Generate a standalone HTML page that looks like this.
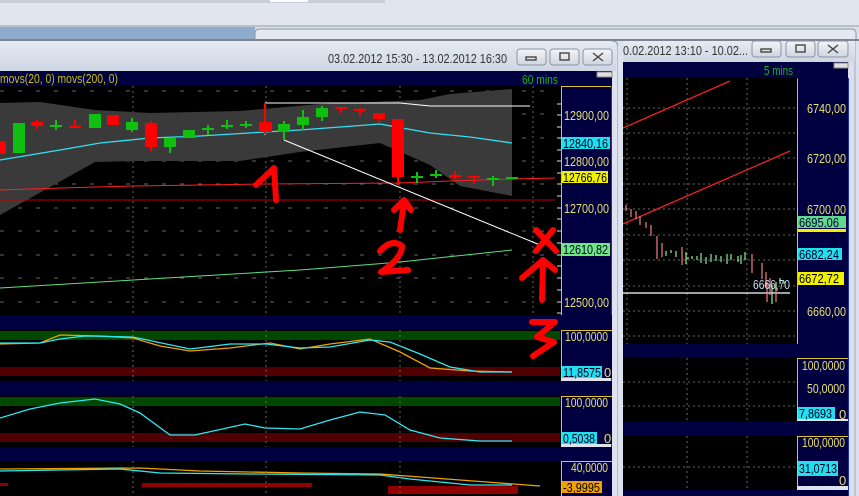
<!DOCTYPE html>
<html><head><meta charset="utf-8"><style>
html,body{margin:0;padding:0;width:859px;height:496px;overflow:hidden;background:#dde2ee}
svg{display:block}
text{font-family:"Liberation Sans",sans-serif;font-size:13px}
</style></head><body>
<svg width="859" height="496" viewBox="0 0 859 496" xmlns="http://www.w3.org/2000/svg">
<defs>
<linearGradient id="tb" x1="0" y1="0" x2="0" y2="1"><stop offset="0" stop-color="#e6ebf3"/><stop offset="1" stop-color="#cdd6e3"/></linearGradient>
<linearGradient id="btn" x1="0" y1="0" x2="0" y2="1"><stop offset="0" stop-color="#f2f4f8"/><stop offset="1" stop-color="#cfd6e0"/></linearGradient>
</defs>
<rect x="0" y="0" width="859" height="26" fill="#e1e5f0"/>
<rect x="0" y="0" width="385" height="3" fill="#c9ced8"/>
<rect x="270" y="0" width="38" height="2" fill="#fff"/>
<rect x="0" y="25" width="859" height="2" fill="#b9c0cc"/>
<rect x="0" y="27" width="255" height="13" fill="#8fabcb"/>
<path d="M255 40 V33 Q255 29 260 29 H852 Q856 29 856 33 V40 Z" fill="#e3e8f1" stroke="#8d96a4"/>
<rect x="0" y="39" width="859" height="2" fill="#7d8592"/>
<rect x="0" y="41" width="616" height="30" fill="url(#tb)"/>
<path d="M612 41 Q618 41 618 47 V496" stroke="#8d96a4" fill="none"/>
<text x="328" y="63" fill="#333" textLength="179" lengthAdjust="spacingAndGlyphs">03.02.2012 15:30 - 13.02.2012 16:30</text>
<g stroke="#8a94a3" fill="url(#btn)">
<rect x="517" y="49" width="29" height="16" rx="3"/><rect x="550" y="49" width="29" height="16" rx="3"/><rect x="583" y="49" width="29" height="16" rx="3"/>
</g>
<g stroke="#444" stroke-width="1.4" fill="none">
<rect x="526" y="57" width="10" height="3"/><rect x="560" y="53" width="9" height="7"/><path d="M593 53 L603 61 M603 53 L593 61"/>
</g>
<rect x="0" y="71" width="612" height="15" fill="#000040"/>
<text x="0" y="83" fill="#c8c000" textLength="118" lengthAdjust="spacingAndGlyphs">movs(20, 0) movs(200, 0)</text>
<text x="522" y="84" fill="#10b810" textLength="36" lengthAdjust="spacingAndGlyphs">60 mins</text>
<rect x="597" y="72" width="15" height="5" fill="#e0e0e0" stroke="#888"/>
<rect x="0" y="86" width="561" height="229" fill="#000"/>
<g stroke="#666" stroke-dasharray="2,3">
<path d="M133 86V315M266 86V315M400 86V315M533 86V315"/>
<path d="M0 91H555M0 114H555M0 138H555M0 161H555M0 184H555M0 208H555M0 231H555M0 255H555M0 278H555M0 302H555" stroke-dasharray="4,14"/>
</g>
<polygon points="0,103 40,102 95,110 150,113 240,111 320,104 420,100 450,94 512,89 512,196 460,186 430,165 380,143 300,152 240,161 140,161 95,162 0,215" fill="#3a3a3a"/>
<path d="M0,160 L60,150 L100,143 L150,138 L200,136 L265,132 L300,130 L380,124 L430,133 L470,137 L512,143" stroke="#30e0f0" stroke-width="1.3" fill="none"/>
<path d="M0,190 L60,188 L133,186 L200,185 L266,184 L400,183 L450,181 L512,179 L555,178" stroke="#ff2020" fill="none"/>
<path d="M0,200 H555" stroke="#c00000" fill="none"/>
<path d="M0,288 L100,282 L200,276 L300,270 L400,262 L512,250" stroke="#60e080" fill="none"/>
<path d="M265,103 V135 M265,103 H400 L430,106 H530" stroke="#fff" fill="none"/>
<path d="M284,140 L540,245" stroke="#fff" fill="none"/>
<g stroke-width="2">
<rect x="0" y="141" width="6" height="13" fill="#f00"/>
<rect x="13" y="123" width="12" height="30" fill="#10c010"/>
<rect x="31" y="122" width="12" height="4" fill="#f00"/><path d="M37 120V129" stroke="#f00"/>
<path d="M50 126H62M56 120V130" stroke="#10c010"/>
<path d="M69 127H81M75 120V127" stroke="#f00"/>
<rect x="89" y="114" width="12" height="14" fill="#10c010"/>
<rect x="107" y="115" width="12" height="10" fill="#f00"/>
<rect x="126" y="122" width="12" height="8" fill="#10c010"/><path d="M132 118V132" stroke="#10c010"/>
<rect x="145" y="123" width="12" height="24" fill="#f00"/><path d="M151 121V151" stroke="#f00"/>
<rect x="164" y="138" width="12" height="9" fill="#10c010"/><path d="M170 147V153" stroke="#10c010"/>
<rect x="183" y="130" width="12" height="8" fill="#10c010"/>
<path d="M202 129H214M208 125V135" stroke="#10c010"/>
<path d="M221 126H233M227 120V129" stroke="#10c010"/>
<path d="M240 125H252M246 121V128" stroke="#10c010"/>
<rect x="259" y="122" width="13" height="10" fill="#f00"/><path d="M265 103V134" stroke="#f00"/>
<rect x="278" y="124" width="12" height="8" fill="#10c010"/><path d="M284 121V140" stroke="#10c010"/>
<rect x="297" y="117" width="12" height="8" fill="#10c010"/><path d="M303 110V130" stroke="#10c010"/>
<rect x="316" y="108" width="12" height="9" fill="#10c010"/><path d="M322 106V121" stroke="#10c010"/>
<path d="M335 108H347M341 107V113" stroke="#f00"/>
<path d="M354 110H366M360 108V116" stroke="#f00"/>
<rect x="373" y="113" width="12" height="6" fill="#f00"/><path d="M379 119V122" stroke="#f00"/>
<rect x="392" y="119" width="12" height="58" fill="#f00"/><path d="M398 177V185" stroke="#f00"/>
<path d="M411 177H423M417 172V183" stroke="#10c010"/>
<path d="M430 175H442M436 170V178" stroke="#10c010"/>
<path d="M449 176H461M455 171V179" stroke="#f00"/>
<path d="M468 177H480M474 176V184" stroke="#f00"/>
<path d="M487 179H499M493 176V186" stroke="#10c010"/>
<path d="M506 178H518" stroke="#10c010"/>
</g>
<rect x="561" y="86" width="51" height="229" fill="#000040"/>
<path d="M561.5 315V86.5H612" stroke="#e0c040" fill="none"/>
<path d="M611.5 86V496" stroke="#2030b0"/>
<g stroke="#ddd"><path d="M557 104H561M557 115H561M557 127H561M557 138H561M557 150H561M557 161H561M557 173H561M557 184H561M557 196H561M557 208H561M557 219H561M557 231H561M557 243H561M557 255H561M557 266H561M557 278H561M557 290H561M557 302H561M557 313H561"/></g>
<g fill="#e8e070"><text x="564" y="120" textLength="45" lengthAdjust="spacingAndGlyphs">12900,00</text><text x="564" y="166" textLength="45" lengthAdjust="spacingAndGlyphs">12800,00</text><text x="564" y="213" textLength="45" lengthAdjust="spacingAndGlyphs">12700,00</text><text x="564" y="307" textLength="45" lengthAdjust="spacingAndGlyphs">12500,00</text></g>
<rect x="562" y="137" width="48" height="12" fill="#20e0f0"/><text x="563" y="148" fill="#002" textLength="45" lengthAdjust="spacingAndGlyphs">12840,16</text>
<rect x="562" y="171" width="46" height="12" fill="#f0f000"/><text x="563" y="182" fill="#000" textLength="44" lengthAdjust="spacingAndGlyphs">12766,76</text>
<rect x="562" y="243" width="48" height="13" fill="#70e880"/><text x="563" y="254" fill="#003" textLength="45" lengthAdjust="spacingAndGlyphs">12610,82</text>
<rect x="0" y="315" width="612" height="15" fill="#000040"/>
<rect x="0" y="381" width="612" height="15" fill="#000040"/>
<rect x="0" y="447" width="612" height="14" fill="#000040"/>
<rect x="0" y="330" width="561" height="51" fill="#000"/>
<rect x="0" y="331" width="560" height="9" fill="#004800"/>
<rect x="0" y="367" width="560" height="9" fill="#500000"/>
<path d="M0,344 L40,343 L60,335 L100,336 L133,338 L160,346 L190,351 L230,348 L270,343 L300,349 L330,344 L370,339 L400,352 L430,368 L470,371 L512,372" stroke="#f0a000" stroke-width="1.3" fill="none"/>
<path d="M0,343 L40,343 L60,339 L85,336 L133,337 L190,349 L230,344 L266,344 L300,348 L330,347 L370,340 L390,342 L420,354 L450,367 L480,372 L512,372" stroke="#30e8f0" stroke-width="1.3" fill="none"/>
<rect x="0" y="396" width="561" height="51" fill="#000"/>
<rect x="0" y="397" width="560" height="9" fill="#004800"/>
<rect x="0" y="433" width="560" height="9" fill="#500000"/>
<path d="M0,418 L30,409 L60,403 L95,399 L120,404 L140,413 L170,435 L195,435 L245,424 L265,428 L300,429 L330,420 L360,412 L385,415 L410,430 L440,438 L480,441 L512,441" stroke="#30e8f0" stroke-width="1.3" fill="none"/>
<rect x="0" y="461" width="561" height="35" fill="#000"/>
<path d="M0,469 L140,468 L200,471 L300,473 L380,474 L420,477 L500,483 L540,486" stroke="#f0a000" stroke-width="1.3" fill="none"/>
<path d="M0,471 L120,469 L160,473 L250,474 L380,475 L410,479 L470,485 L512,485" stroke="#30e8f0" stroke-width="1.3" fill="none"/>
<g fill="#900000"><rect x="0" y="483" width="8" height="3"/><rect x="142" y="483" width="170" height="4"/><rect x="388" y="486" width="130" height="8"/></g>
<g stroke="#666" stroke-dasharray="2,3"><path d="M133 330V381M266 330V381M400 330V381M133 396V447M266 396V447M400 396V447M133 461V496M266 461V496M400 461V496"/></g>
<rect x="561" y="330" width="51" height="48" fill="#000040"/><path d="M561.5 378V330.5H612" stroke="#e0c040" fill="none"/>
<rect x="561" y="396" width="51" height="48" fill="#000040"/><path d="M561.5 444V396.5H612" stroke="#e0c040" fill="none"/>
<rect x="561" y="461" width="51" height="35" fill="#000040"/><path d="M561.5 496V461.5H612" stroke="#e0c040" fill="none"/>
<g fill="#e8e070"><text x="565" y="341" textLength="43" lengthAdjust="spacingAndGlyphs">100,0000</text><text x="565" y="407" textLength="43" lengthAdjust="spacingAndGlyphs">100,0000</text><text x="571" y="472" textLength="37" lengthAdjust="spacingAndGlyphs">40,0000</text><text x="604" y="377">0</text><text x="604" y="443">0</text></g>
<rect x="562" y="366" width="40" height="12" fill="#20e0f0"/><text x="563" y="377" fill="#002" textLength="38" lengthAdjust="spacingAndGlyphs">11,8575</text>
<rect x="562" y="432" width="35" height="12" fill="#20e0f0"/><text x="563" y="443" fill="#002" textLength="32" lengthAdjust="spacingAndGlyphs">0,5038</text>
<rect x="562" y="481" width="40" height="12" fill="#f0a000"/><text x="563" y="492" fill="#000" textLength="37" lengthAdjust="spacingAndGlyphs">-3,9995</text>
<g stroke="#ff0000" stroke-width="6" fill="none" stroke-linecap="round" stroke-linejoin="round">
<path d="M256 185 L274 168 L276 200"/>
<path d="M380 251 Q392 238 402 246 Q402 258 381 272 L408 270"/>
<path d="M400 230 L404 202 M394 210 L404 200 L411 210"/>
<path d="M536 230 L556 251 M553 230 L536 251"/>
<path d="M542 300 L543 263 M522 278 L543 260 L555 270"/>
<path d="M532 322 L555 322 L537 337 L554 342 L533 356"/>
</g>
<rect x="618" y="41" width="5" height="455" fill="#dbe3ef"/>
<rect x="848" y="62" width="11" height="434" fill="#dbe1ec"/>
<path d="M855 41V496" stroke="#a0a8b6"/>
<rect x="623" y="41" width="232" height="21" fill="url(#tb)"/>
<text x="623" y="55" fill="#333" textLength="125" lengthAdjust="spacingAndGlyphs">0.02.2012 13:10 - 10.02...</text>
<g stroke="#8a94a3" fill="url(#btn)"><rect x="752" y="41" width="29" height="16" rx="3"/><rect x="786" y="41" width="29" height="16" rx="3"/><rect x="818" y="41" width="30" height="16" rx="3"/></g>
<g stroke="#444" stroke-width="1.4" fill="none"><rect x="761" y="49" width="10" height="3"/><rect x="796" y="45" width="9" height="7"/><path d="M828 45 L838 53 M838 45 L828 53"/></g>
<rect x="623" y="62" width="225" height="16" fill="#000040"/>
<text x="764" y="75" fill="#10b810" textLength="29" lengthAdjust="spacingAndGlyphs">5 mins</text>
<rect x="834" y="63" width="14" height="5" fill="#e0e0e0" stroke="#888"/>
<rect x="623" y="78" width="174" height="266" fill="#000"/>
<g stroke="#666" stroke-dasharray="2,3">
<path d="M627 78V344M687 78V344M747 78V344"/>
<path d="M623 108H795M623 133H795M623 158H795M623 184H795M623 209H795M623 235H795M623 260H795M623 286H795M623 311H795M623 336H795"/>
</g>
<path d="M623,128 L730,81 M623,224 L790,151" stroke="#f02020" stroke-width="1.3" fill="none"/>
<path d="M623,293 H790" stroke="#fff" stroke-width="1.3"/>
<g stroke="#f08080" stroke-width="1.2" fill="none">
<path d="M626 205V211M631 209V217M636 211V219M640 216V225M646 222V228M651 225V236M657 236V259M662 243V257M682 247V265M752 254V273M762 263V279M766 272V287M770 278V295M776 282V302M767 282V302"/>
</g>
<g stroke="#90f090" stroke-width="1.2" fill="none">
<path d="M666 251V256M671 250V253M676 251V257M686 252V264M688 257V259M692 256V259M697 256V260M701 253V263M706 257V264M711 254V262M716 255V261M721 256V262M727 254V264M731 254V260M738 256V262M741 255V264M745 252V260M772 285V304M776 282V290M780 278V284M784 281V284"/>
</g>
<text x="753" y="289" fill="#c0d8f0" textLength="37" lengthAdjust="spacingAndGlyphs">6666,70</text>
<rect x="797" y="78" width="51" height="266" fill="#000040"/>
<path d="M797.5 344V78.5" stroke="#e0c040"/><path d="M848.5 78V496" stroke="#2030b0"/>
<g fill="#e8e070"><text x="807" y="113" textLength="39" lengthAdjust="spacingAndGlyphs">6740,00</text><text x="807" y="163" textLength="39" lengthAdjust="spacingAndGlyphs">6720,00</text><text x="807" y="214" textLength="39" lengthAdjust="spacingAndGlyphs">6700,00</text><text x="807" y="316" textLength="39" lengthAdjust="spacingAndGlyphs">6660,00</text></g>
<rect x="798" y="216" width="48" height="12" fill="#60d890"/><rect x="798" y="229" width="48" height="3" fill="#f0f000"/><text x="799" y="227" fill="#003" textLength="40" lengthAdjust="spacingAndGlyphs">6695,06</text>
<rect x="798" y="248" width="44" height="12" fill="#20e0f0"/><text x="799" y="259" fill="#002" textLength="40" lengthAdjust="spacingAndGlyphs">6682,24</text>
<rect x="798" y="272" width="46" height="13" fill="#f0f000"/><text x="799" y="283" fill="#000" textLength="40" lengthAdjust="spacingAndGlyphs">6672,72</text>
<rect x="623" y="344" width="225" height="14" fill="#000040"/>
<rect x="623" y="358" width="174" height="63" fill="#000"/>
<rect x="623" y="421" width="225" height="15" fill="#000040"/>
<rect x="623" y="436" width="174" height="54" fill="#000"/>
<rect x="623" y="490" width="225" height="6" fill="#000040"/>
<g stroke="#666" stroke-dasharray="2,3"><path d="M687 358V421M747 358V421M687 436V490M747 436V490M623 382H795M623 406H795M623 467H795"/></g>
<rect x="797" y="358" width="51" height="61" fill="#000040"/><path d="M797.5 419V358.5H848" stroke="#e0c040" fill="none"/>
<rect x="797" y="436" width="51" height="50" fill="#000040"/><path d="M797.5 486V436.5H848" stroke="#e0c040" fill="none"/>
<g fill="#e8e070"><text x="802" y="370" textLength="43" lengthAdjust="spacingAndGlyphs">100,0000</text><text x="807" y="393" textLength="38" lengthAdjust="spacingAndGlyphs">50,0000</text><text x="839" y="419">0</text><text x="802" y="447" textLength="43" lengthAdjust="spacingAndGlyphs">100,0000</text><text x="839" y="485">0</text></g>
<rect x="798" y="407" width="37" height="12" fill="#20e0f0"/><text x="799" y="418" fill="#002" textLength="33" lengthAdjust="spacingAndGlyphs">7,8693</text>
<rect x="798" y="461" width="40" height="15" fill="#20e0f0"/><text x="799" y="473" fill="#002" textLength="38" lengthAdjust="spacingAndGlyphs">31,0713</text>
</svg>
</body></html>
